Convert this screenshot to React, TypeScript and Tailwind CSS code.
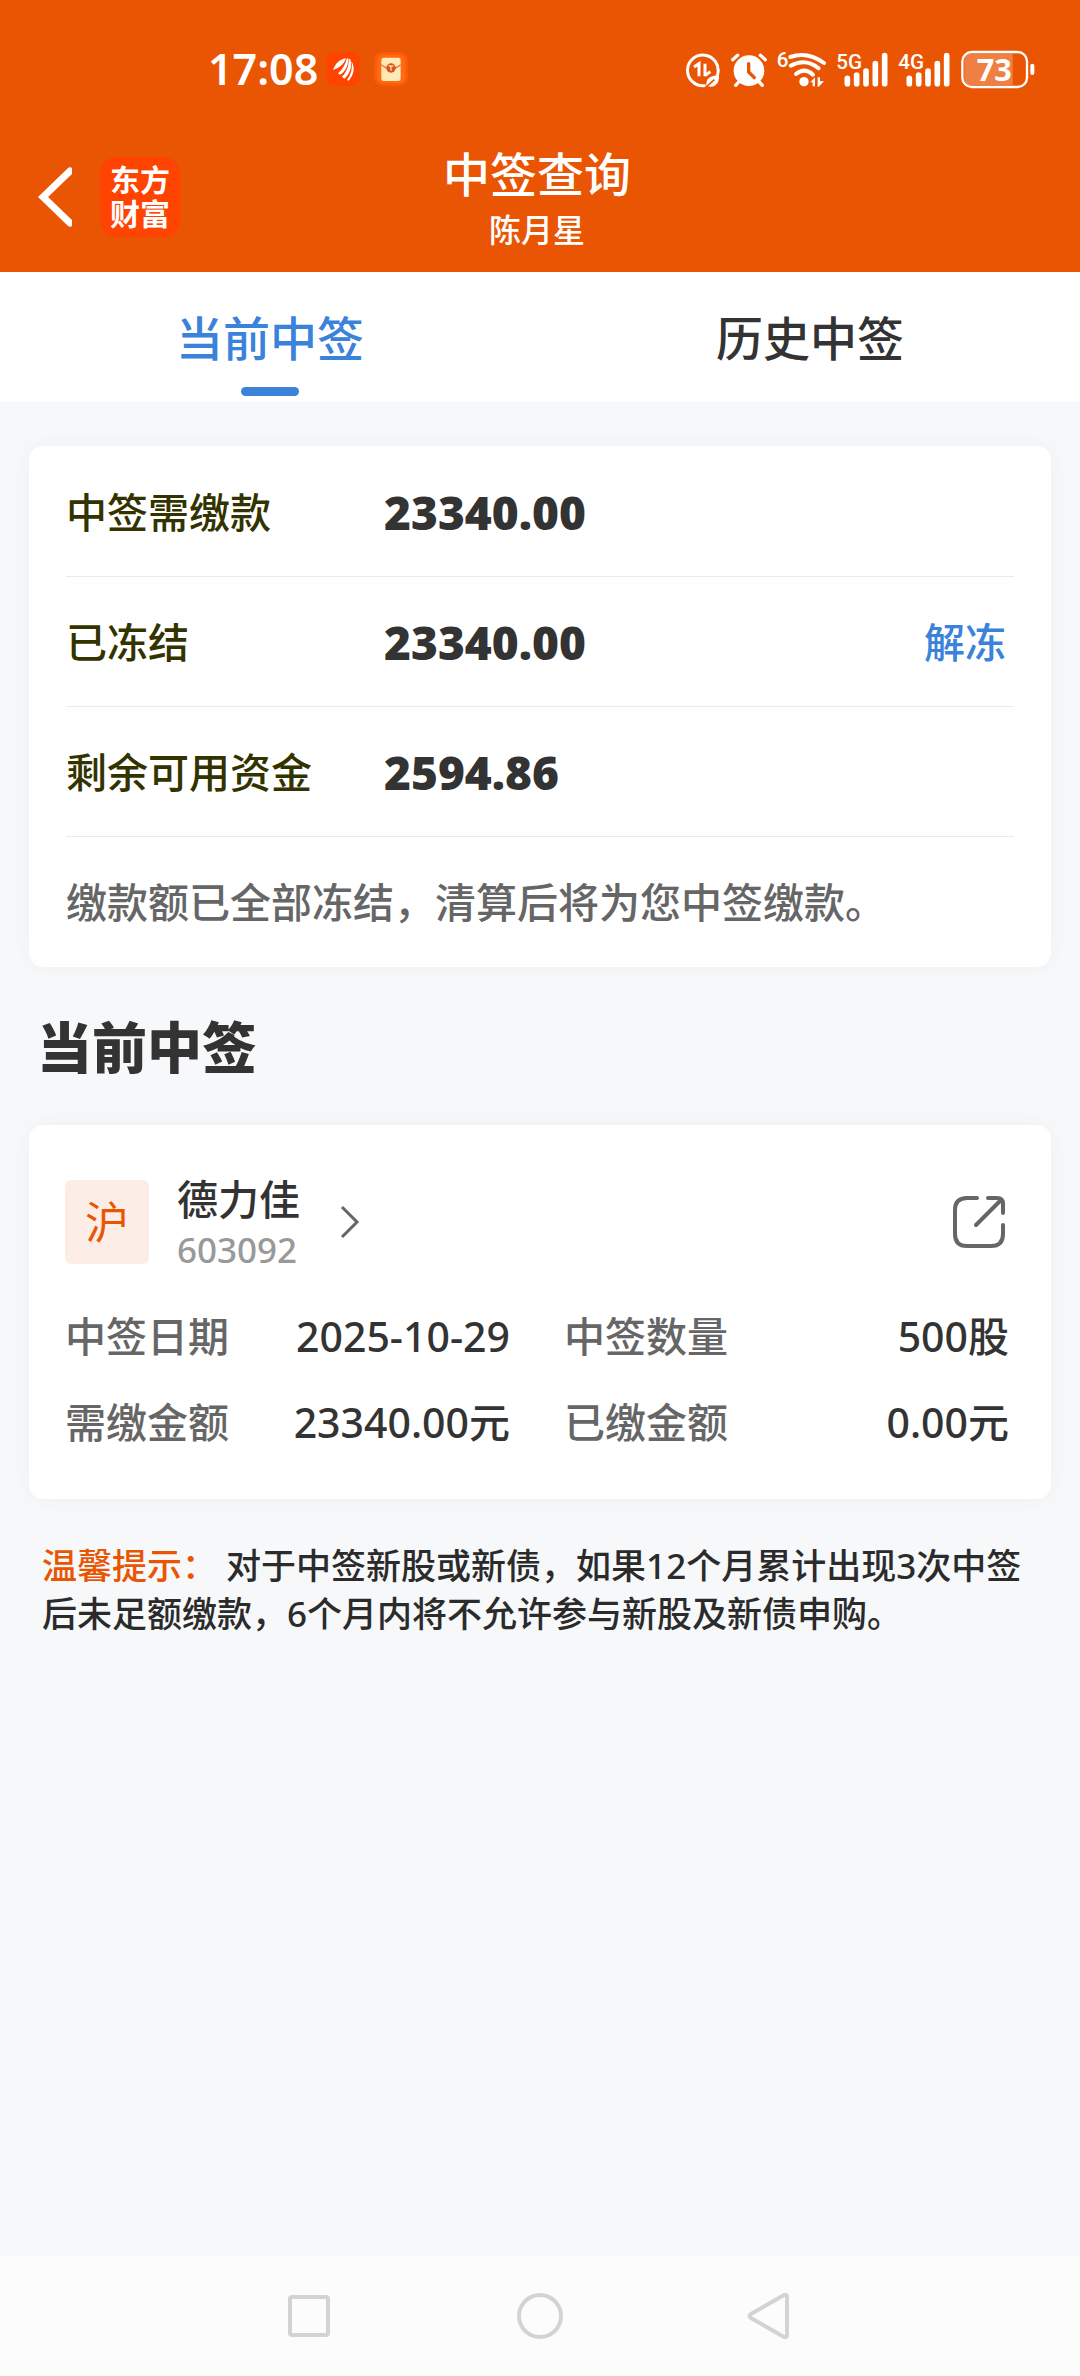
import { useState } from "react";

const TABS = ["当前中签", "历史中签"];

const FUNDS = [
  { label: "中签需缴款", value: "23340.00" },
  { label: "已冻结", value: "23340.00", action: "解冻" },
  { label: "剩余可用资金", value: "2594.86" },
];

const DETAILS = [
  { label: "中签日期", value: "2025-10-29" },
  { label: "中签数量", value: "500股" },
  { label: "需缴金额", value: "23340.00元" },
  { label: "已缴金额", value: "0.00元" },
];

function Signal({ label }: { label: string }) {
  return (
    <svg className="h-10 w-[51px] overflow-visible" viewBox="497 54 153 120" fill="#fff">
      <text x="495" y="113" fontSize="62" fontWeight="500" className="font-[Roboto,sans-serif]">
        {label}
      </text>
      <g stroke="#fff" strokeWidth="17" strokeLinecap="round">
        <path d="M528 142v16M556 132v26M584 120v38M612 98v60M640 74v84" />
      </g>
    </svg>
  );
}

function StatusBar() {
  return (
    <div className="flex items-center justify-between pt-12 pl-[208px] pr-[45px]">
      <div className="flex h-[42px] items-center">
        <span className="w-[118px] text-[43px] leading-[42px] font-semibold">17:08</span>
        <svg className="mr-[14px] h-[34px] w-[34px]" viewBox="0 0 102 102">
          <rect width="100" height="100" x="1" y="1" rx="22" fill="#ff4300" />
          <g fill="#fff">
            <path d="M21 54C27 36 40 22 60 19C54 36 42 47 21 54Z" />
            <path d="M36 64C50 52 58 38 62 20L67 19C67 42 58 60 42 68Z" />
            <path d="M48 74C62 60 69 42 68 20L73 22C79 46 72 66 55 80Z" />
            <path d="M63 84C76 66 80 48 76 27C88 46 84 68 68 86Z" />
          </g>
        </svg>
        <svg className="h-[34px] w-[34px]" viewBox="0 0 102 102">
          <rect width="100" height="100" x="1" y="1" rx="22" fill="#ff5a0a" />
          <rect x="8" y="8" width="86" height="86" rx="18" fill="#ff6a12" />
          <rect x="22" y="17" width="58" height="70" rx="7" fill="#ffe9b4" />
          <path d="M22 38Q51 62 80 38" fill="none" stroke="#e8703a" strokeWidth="4" />
          <circle cx="51" cy="48" r="14" fill="#e0501c" />
          <path d="M44 42h14M51 42v14" stroke="#ffe0a8" strokeWidth="4" />
        </svg>
      </div>

      <div className="flex h-[42px] items-center gap-[11px]">
        <svg className="h-10 w-[35px]" viewBox="46 54 105 120" fill="none" stroke="#fff">
          <path d="M144 130A46 46 0 1 0 104 164" strokeWidth="9" strokeLinecap="round" />
          <path d="M73 108L88 98V136M106 98V136M106 134L122 122" strokeWidth="9" />
          <path d="M110 164C108 142 122 134 148 132C150 156 136 172 114 166Z" fill="#fff" stroke="none" />
          <path d="M108 170L134 146" stroke="#ea5504" strokeWidth="5" />
        </svg>
        <svg className="h-10 w-9" viewBox="186 54 108 120" fill="none" stroke="#fff" strokeLinecap="round">
          <circle cx="240" cy="119" r="46" fill="#fff" stroke="none" />
          <path d="M191 86L206 73M289 86L274 73M208 154L200 163M272 154L280 163" strokeWidth="10" />
          <path d="M239 98V123L256 140" stroke="#ea5504" strokeWidth="10" />
        </svg>
        <svg className="h-10 w-12 overflow-visible" viewBox="324 54 144 120" fill="#fff">
          <text x="320" y="109" fontSize="62" fontWeight="500" className="font-[Roboto,sans-serif]">
            6
          </text>
          <g fill="none" stroke="#fff" strokeWidth="12" strokeLinecap="round">
            <path d="M361 78Q412 60 462 96M362 104Q408 80 446 112M378 129Q404 108 429 131" />
          </g>
          <circle cx="402" cy="152" r="14" />
          <path d="M421 154L435 139V166H428V154ZM443 139H450V151L462 151L446 167H443Z" />
        </svg>
        <Signal label="5G" />
        <Signal label="4G" />
        <svg className="h-10 w-[74px]" viewBox="868 54 222 120" fill="#fff">
          <path d="M892 68H1023V162H892Q878 162 878 146V84Q878 68 892 68Z" fillOpacity="0.25" />
          <rect x="872" y="63" width="194" height="105" rx="28" fill="none" stroke="#fff" strokeWidth="7" />
          <rect x="1076" y="98" width="12" height="34" rx="6" />
          <text x="968" y="149" fontSize="92" fontWeight="700" textAnchor="middle">
            73
          </text>
        </svg>
      </div>
    </div>
  );
}

function Header() {
  return (
    <header className="bg-[#ea5504] text-white">
      <StatusBar />
      <div className="grid grid-cols-[1fr_auto_1fr] items-start pt-[54px] pr-11 pb-4 pl-[38px]">
        <div className="flex items-center gap-7 pt-[13px]">
          <button aria-label="返回">
            <svg className="h-[60px] w-[34px]" viewBox="0 0 34 60" fill="none" stroke="#fff" strokeWidth="7">
              <path d="M32 4L5 30L32 56" strokeLinecap="round" />
            </svg>
          </button>
          <div className="flex h-20 w-20 flex-col items-center justify-center rounded-2xl bg-[#ff4300] text-[30px] leading-[34px] font-bold">
            <span>东方</span>
            <span>财富</span>
          </div>
        </div>
        <div className="text-center">
          <h1 className="text-[47px] leading-[60px]">中签查询</h1>
          <p className="text-[32px] leading-[52px]">陈月星</p>
        </div>
      </div>
    </header>
  );
}

function FundsCard() {
  return (
    <section className="rounded-[14px] bg-white px-[37px] pt-px shadow-[0_0_20px_rgba(0,0,0,0.04)]">
      {FUNDS.map(row => (
        <div key={row.label} className="flex h-[130px] items-center border-b border-[#ebebec] pr-2">
          <span className="w-[318px] text-[#333300]">{row.label}</span>
          <span className="flex-1 text-[46px] font-black">{row.value}</span>
          {row.action && <button className="text-[#3a82da]">{row.action}</button>}
        </div>
      ))}
      <p className="flex h-[130px] items-center text-[#666]">缴款额已全部冻结，清算后将为您中签缴款。</p>
    </section>
  );
}

function StockCard() {
  return (
    <section className="rounded-[14px] bg-white px-9 pt-[46px] pb-[34px] shadow-[0_0_20px_rgba(0,0,0,0.04)]">
      <div className="flex items-center justify-between pr-2">
        <a href="#" className="flex items-center">
          <span className="flex h-[84px] w-[84px] items-center justify-center rounded-md bg-[#fceee6] text-[44px] font-normal text-[#ea5504]">
            沪
          </span>
          <span className="ml-7 flex flex-col">
            <span className="leading-[56px] text-[#333]">德力佳</span>
            <span className="text-[35px] leading-[46px] text-[#999]">603092</span>
          </span>
          <svg className="ml-10 h-[34px] w-5" viewBox="0 0 20 34" fill="none" stroke="#666" strokeWidth="3">
            <path d="M2 2L17 17L2 32" />
          </svg>
        </a>
        <button aria-label="分享">
          <svg className="h-14 w-14" viewBox="0 0 56 56" fill="none" stroke="#666" strokeWidth="4" strokeLinecap="round">
            <path d="M26 4H16Q4 4 4 16V40Q4 52 16 52H40Q52 52 52 40V31" />
            <path d="M37 4H46Q52 4 52 10V19M25 31L50 6" />
          </svg>
        </button>
      </div>
      <dl className="mt-5 grid grid-cols-2 gap-x-[54px] pr-[6px]">
        {DETAILS.map(item => (
          <div key={item.label} className="flex h-[86px] items-center justify-between">
            <dt className="text-[#666]">{item.label}</dt>
            <dd className="text-[#333]">{item.value}</dd>
          </div>
        ))}
      </dl>
    </section>
  );
}

function NavBar() {
  return (
    <nav className="flex h-[120px] items-center justify-center gap-[184px] bg-[#fcfcfc]">
      <button aria-label="最近任务">
        <svg className="h-[46px] w-[46px]" viewBox="0 0 46 46" fill="none" stroke="#d3d3d3" strokeWidth="4">
          <rect x="3" y="4" width="38" height="38" rx="2" />
        </svg>
      </button>
      <button aria-label="主屏幕">
        <svg className="h-[46px] w-[46px]" viewBox="0 0 46 46" fill="none" stroke="#d3d3d3" strokeWidth="4">
          <circle cx="23" cy="23" r="21" />
        </svg>
      </button>
      <button aria-label="返回">
        <svg className="h-[46px] w-[46px]" viewBox="0 0 46 46" fill="none" stroke="#d3d3d3" strokeWidth="4">
          <path d="M4 21L37 2Q40 1 40 4V42Q40 45 37 44L4 25Q1 23 4 21Z" />
        </svg>
      </button>
    </nav>
  );
}

export default function App() {
  const [tab, setTab] = useState(0);

  return (
    <div className="flex min-h-screen flex-col bg-[#f6f8fa] font-['Noto_Sans','Noto_Sans_CJK_SC',sans-serif] text-[41px] leading-[56px] font-medium text-[#333]">
      <Header />
      <div className="flex bg-white" role="tablist">
        {TABS.map((name, i) => (
          <button
            key={name}
            role="tab"
            aria-selected={tab === i}
            onClick={() => setTab(i)}
            className={`flex flex-1 flex-col items-center pt-9 text-[47px] leading-[60px] ${tab === i ? "text-[#3a82da]" : "text-[#333]"}`}
          >
            {name}
            <span className={`mt-[19px] mb-[6px] h-[9px] w-[58px] rounded-full ${tab === i ? "bg-[#3a82da]" : "bg-transparent"}`} />
          </button>
        ))}
      </div>

      <main className="flex-1 px-[29px] pt-11">
        <FundsCard />
        <h2 className="px-2 pt-[44px] pb-[42px] text-[55px] leading-[72px] font-black">当前中签</h2>
        <StockCard />
        <p className="px-[13px] pt-[43px] text-[35px] leading-[48px] text-[#2b2b2b]">
          <span className="text-[#ea5504]">温馨提示：</span> 对于中签新股或新债，如果12个月累计出现3次中签后未足额缴款，6个月内将不允许参与新股及新债申购。
        </p>
      </main>

      <NavBar />
    </div>
  );
}
